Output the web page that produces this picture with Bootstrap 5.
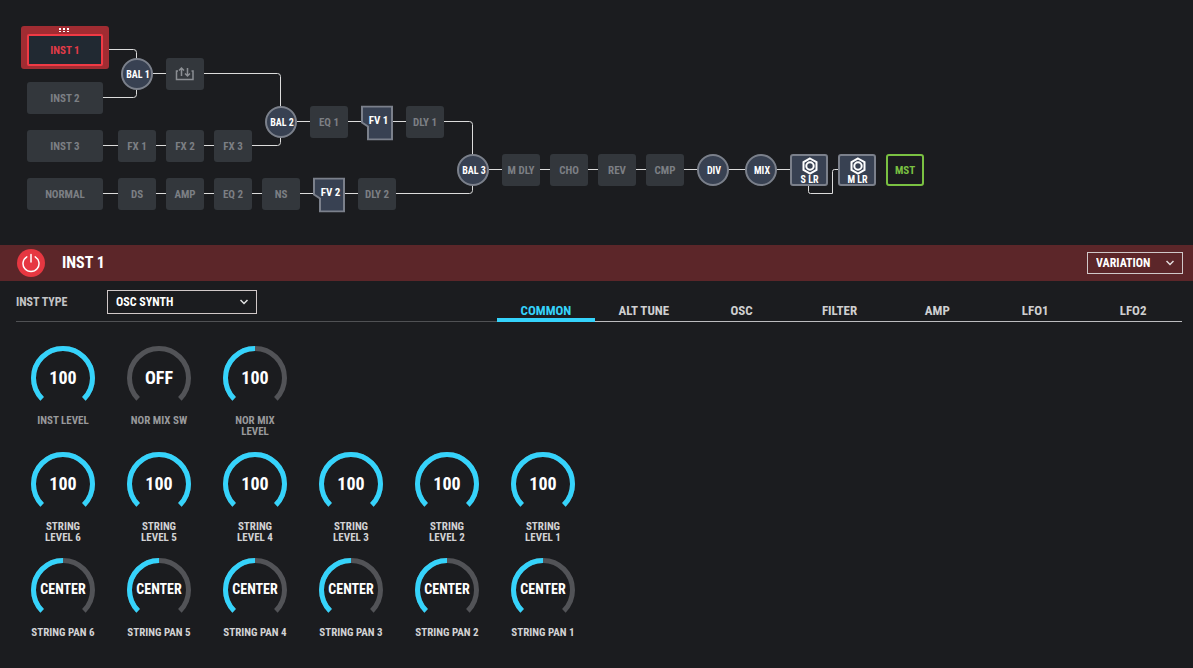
<!DOCTYPE html>
<html lang="en">
<head>
<meta charset="utf-8">
<meta name="viewport" content="width=device-width, initial-scale=1">
<title>INST 1</title>
<link href="https://cdn.jsdelivr.net/npm/bootstrap@5.3.0/dist/css/bootstrap.min.css" rel="stylesheet">
<style>
body{background:#1b1c1f;color:#fff;font-family:"Roboto Condensed","Liberation Sans Narrow","Roboto",sans-serif;font-weight:700;font-size:12px;line-height:16px}
/* signal chain: 48px columns, 24px rows */
.chain{height:245px}
.chain svg.wires{left:0;top:0;width:924px;height:220px;fill:none;stroke:#dcdcdc}
.node{position:absolute;left:calc(137px + 48px*var(--c));top:calc(50px + 24px*var(--r));transform:translate(-50%,-50%);width:38px;height:32px;padding:2px 0 0;border:0;border-radius:3px;background:#33373c;color:#7c7f84;font-size:11px;line-height:14px;font-weight:700;white-space:nowrap;display:flex;align-items:center;justify-content:center}
.node.src{width:76px}
.node.sel{border:2px solid #f03a45;border-radius:2px;background:#212932;color:#e23b48;box-shadow:0 0 0 2px #a12c32}
.halo{left:21px;top:26px;width:88px;height:43px;border-radius:3px;background:#a12c32}
.halo svg{left:38px;top:2px}
.node.io{padding:0}
.node.dot{width:32px;padding:2px 0 0 2px;border:2px solid #7b808b;border-radius:50%;background:#384152;color:#fff;font-size:10px}
.node.spk{border:2px solid #7b808b;background:#384152;color:#fff;flex-direction:column;justify-content:flex-end;padding:0 0 0 1px;font-size:10px;line-height:9px}
.node.fv{width:32px;height:35px;margin-top:1px;background:none;color:#fff;align-items:flex-start;padding:8px 0 0 3px}
.node.fv svg{left:0;top:0;z-index:-1}
.node.mst{border:2px solid #7ac142;background:none;color:#7ac142}
.titlebar{background:#5c2629;height:36px;padding:0 10px 0 17px}
.titlebar h1{font-size:16px;line-height:20px;font-weight:700;margin:0 0 0 17px}
.power{width:28px;height:28px;border:0;padding:0;border-radius:50%;background:#e63741}
.picker{height:24px;border:1px solid #d0c8c8;border-radius:0;background-color:transparent;color:#fff;font-size:12px;line-height:16px;font-weight:700;padding:0 28px 0 8px;appearance:none;width:150px}
.pickwrap svg{right:9px;top:50%;margin-top:-3px;pointer-events:none}
.picker.short{width:96px;height:22px}
.settings{margin:0 11px 0 16px;height:41px}
.typebox{border-bottom:1px solid #505154;flex:0 0 481px;padding-top:9px}
.typebox label{width:91px;color:#c4c4c6;line-height:24px}
.tabs{border-bottom:1px solid #bdbdbf}
.tabs button{border:0;border-radius:0;background:none;color:#cfcfd0;font-size:13px;line-height:14px;font-weight:700;padding:0;margin-bottom:-1px;border-bottom:4px solid transparent;background-clip:padding-box}
.tabs button.active{color:#35d3fb;border-color:#35d3fb}
.knobs{padding:24px 15px 24px}
.knobrow{min-height:106px}
.knob{width:96px}
.dial{width:64px;height:64px}
.dial svg{left:0;top:0}
.dial output{font-size:18px;line-height:22px}
.dial output.word{font-size:14px;padding-bottom:2px}
.knob label{font-size:11px;line-height:11px;width:66px;margin-top:5px;color:#d2d2d4}
.knob.dim label{color:#98999b}
</style>
</head>
<body>
<section class="chain position-relative overflow-hidden" id="chain" aria-label="Signal chain">
  <svg class="wires position-absolute" viewBox="0 0 924 220">
    <path d="M103 49.5H133.500Q136.500 49.500 136.500 52.500V94.500Q136.500 97.500 133.500 97.500H103M153 73.500H277.500Q280.500 73.500 280.500 76.500V142.500Q280.500 145.500 277.500 145.500H103M297 121.500H469.500Q472.500 121.500 472.500 124.500V190.500Q472.500 193.500 469.500 193.500H103M489 169.500H790M808.500 186V191.500Q808.500 193.500 810.500 193.500H832.500V171.500Q832.500 169.500 834.500 169.500H838"/>
  </svg>
  <div class="halo position-absolute">
    <svg class="position-absolute" width="10" height="6" fill="#fff"><path d="M0 0h2v2H0zM4 0h2v2H4zM8 0h2v2H8zM0 3h2v2H0zM4 3h2v2H4zM8 3h2v2H8z"/></svg>
  </div>
</section>

<header class="titlebar d-flex align-items-center">
  <button class="power d-flex align-items-center justify-content-center" aria-label="Power">
    <svg width="20" height="20" fill="none" stroke="#fff" stroke-width="1.500" stroke-linecap="round"><path d="M10 1.500V9M5.800 3.800A8 8 0 1 0 14.200 3.800"/></svg>
  </button>
  <h1>INST 1</h1>
  <div class="pickwrap position-relative ms-auto">
    <select class="picker short d-block" aria-label="Variation"><option>VARIATION</option></select>
    <svg class="position-absolute" width="8" height="6" fill="none" stroke="#e4dede" stroke-width="1.500"><path d="M.5 1L4 4.500L7.500 1"/></svg>
  </div>
</header>

<div class="settings d-flex">
  <div class="typebox d-flex align-items-start">
    <label for="type">INST TYPE</label>
    <div class="pickwrap position-relative">
      <select class="picker d-block" id="type"><option>OSC SYNTH</option></select>
      <svg class="position-absolute" width="8" height="6" fill="none" stroke="#e4e4e4" stroke-width="1.500"><path d="M.5 1L4 4.500L7.500 1"/></svg>
    </div>
  </div>
  <nav class="tabs nav nav-fill nav-justified flex-grow-1 align-items-end" role="tablist">
    <button class="nav-item active" role="tab">COMMON</button>
    <button class="nav-item" role="tab">ALT TUNE</button>
    <button class="nav-item" role="tab">OSC</button>
    <button class="nav-item" role="tab">FILTER</button>
    <button class="nav-item" role="tab">AMP</button>
    <button class="nav-item" role="tab">LFO1</button>
    <button class="nav-item" role="tab">LFO2</button>
  </nav>
</div>

<main class="knobs" id="knobs"></main>

<script src="https://cdn.jsdelivr.net/npm/bootstrap@5.3.0/dist/js/bootstrap.bundle.min.js"></script>
<script>
// label, column, row, kind
const nodes = [
  ['INST 1',-1.5,0,'src sel'],['INST 2',-1.5,2,'src'],['INST 3',-1.5,4,'src'],['NORMAL',-1.5,6,'src'],
  ['BAL 1',0,1,'dot'],['',1,1,'io'],['BAL 2',3,3,'dot'],['EQ 1',4,3,''],['FV 1',5,3,'fv'],['DLY 1',6,3,''],
  ['FX 1',0,4,''],['FX 2',1,4,''],['FX 3',2,4,''],
  ['DS',0,6,''],['AMP',1,6,''],['EQ 2',2,6,''],['NS',3,6,''],['FV 2',4,6,'fv'],['DLY 2',5,6,''],
  ['BAL 3',7,5,'dot'],['M DLY',8,5,''],['CHO',9,5,''],['REV',10,5,''],['CMP',11,5,''],
  ['DIV',12,5,'dot'],['MIX',13,5,'dot'],['S LR',14,5,'spk'],['M LR',15,5,'spk'],['MST',16,5,'mst']
];
const art = {
  io: '<svg width="20" height="16" fill="none" stroke="#8b8e93" stroke-width="1.500"><path d="M3 5H1.500V13.500H18V5H16.500M6.500 10V2M4 4.500L6.500 2L9 4.500M12.500 2V9.500M10 7.500L12.500 10L15 7.500"/></svg>',
  fv: '<svg class="position-absolute" width="32" height="35" fill="#384152" stroke="#7b808b" stroke-width="2"><path d="M1 1H31V34H7V21L1 17Z"/></svg>',
  spk: '<svg width="18" height="18" fill="none" stroke="#fff" stroke-width="2"><path d="M9 1.500L15.500 5.200V12.800L9 16.500L2.500 12.800V5.200Z"/><circle cx="9" cy="9" r="3.700"/></svg>'
};
document.getElementById('chain').insertAdjacentHTML('beforeend', nodes.map(([t,c,r,k]) =>
  `<button class="node ${k}" style="--c:${c};--r:${r}"${t ? '' : ' aria-label="Send return"'}>${art[k.split(' ')[0]]||''}${t ? `<span>${t}</span>` : ''}</button>`).join(''));

// label, shown value, fraction of the sweep
const rows = [
  [['INST LEVEL','100',1],['NOR MIX SW','OFF',0],['NOR MIX LEVEL','100',.5]],
  [6,5,4,3,2,1].map(n => ['STRING LEVEL&nbsp;'+n,'100',1]),
  [6,5,4,3,2,1].map(n => ['STRING PAN '+n,'CENTER',.5])
];
const arc = 'M11.140 52.860A29.500 29.500 0 1 1 52.860 52.860';
document.getElementById('knobs').innerHTML = rows.map((row,i) => '<div class="knobrow d-flex">' + row.map(([l,v,f],j) =>
  `<div class="knob d-flex flex-column align-items-center ${i ? '' : 'dim'}">
    <div class="dial position-relative d-flex align-items-center justify-content-center">
      <svg class="position-absolute" width="64" height="64" fill="none" stroke-width="5"><path d="${arc}" stroke="#525357"/>${f ? `<path d="${arc}" stroke="#35d3fb" pathLength="100" stroke-dasharray="${f*100} 200"/>` : ''}</svg>
      <output class="position-relative ${v=='CENTER' ? 'word' : ''}">${v}</output>
      <input type="range" class="position-absolute w-100 h-100 opacity-0" id="k${i}${j}" value="${f*100}">
    </div>
    <label class="text-center" for="k${i}${j}">${l}</label>
  </div>`).join('') + '</div>').join('');
</script>
</body>
</html>
